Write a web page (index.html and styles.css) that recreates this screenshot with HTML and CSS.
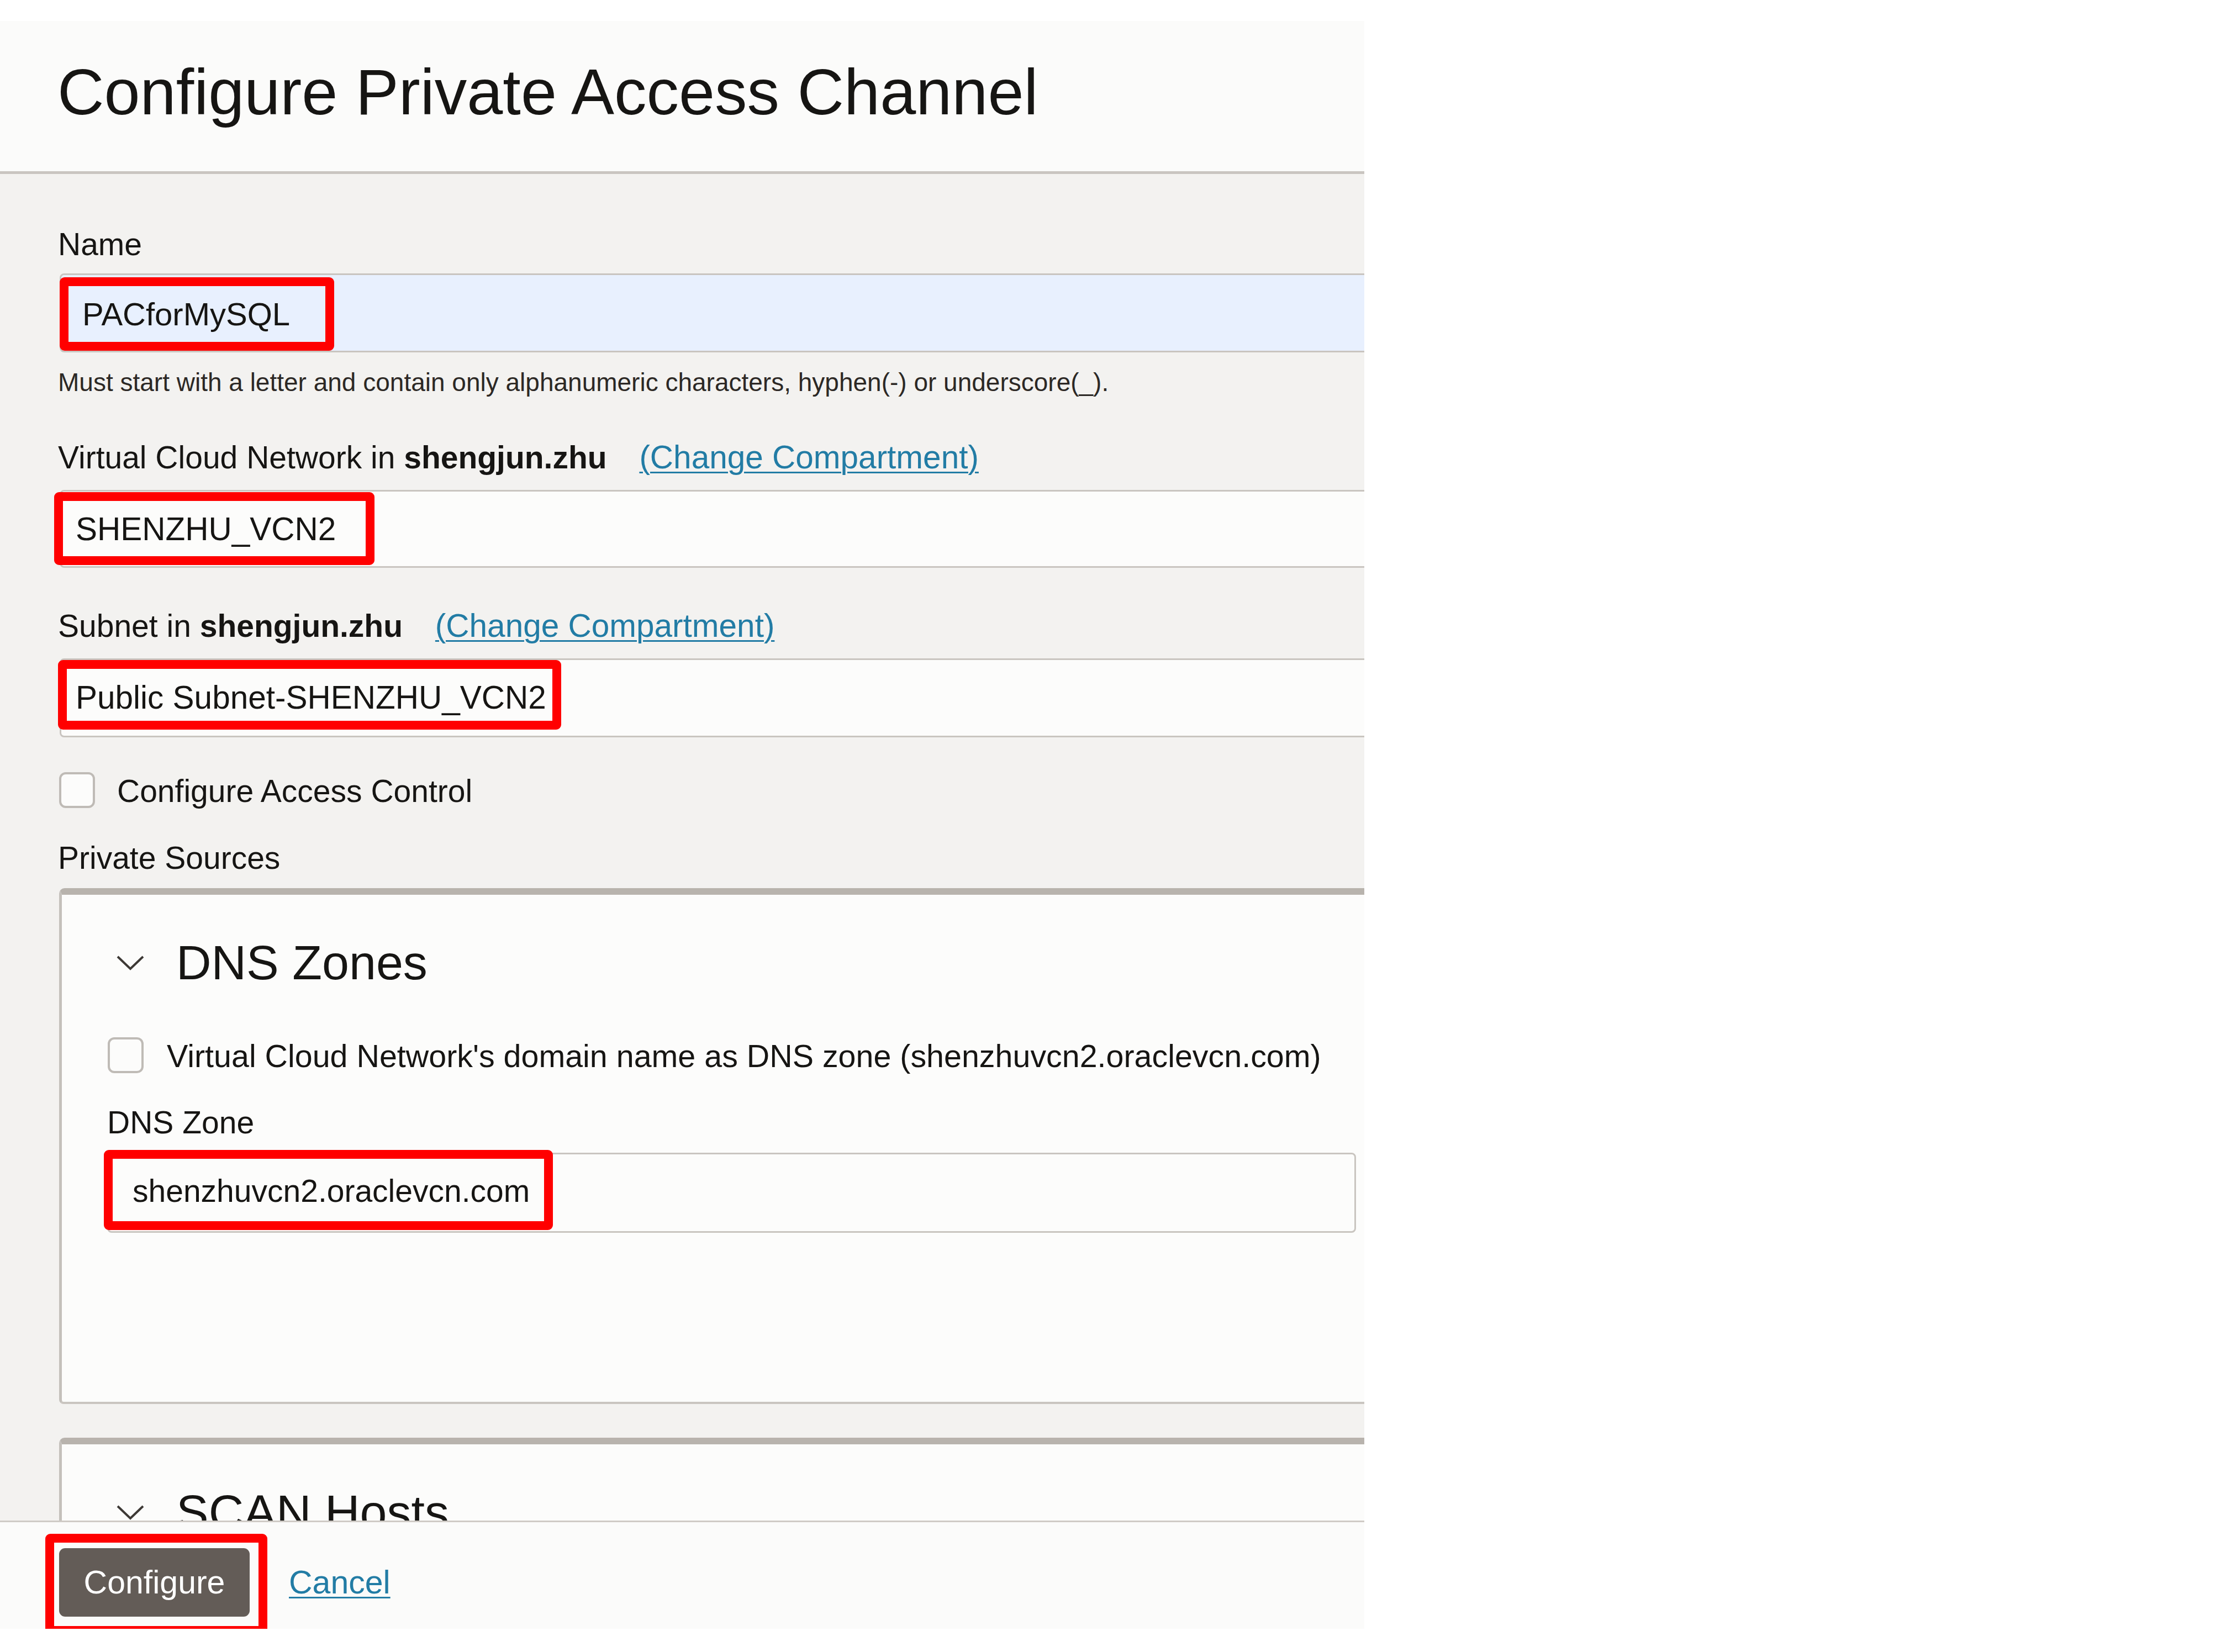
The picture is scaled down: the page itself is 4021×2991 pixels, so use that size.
FILE: index.html
```html
<!DOCTYPE html>
<html lang="en">
<head>
<meta charset="utf-8">
<title>Configure Private Access Channel</title>
<link rel="stylesheet" href="styles.css">
</head>
<body>
<div class="page">
  <div class="panel">
    <header class="panel-header">
      <h1 class="title">Configure Private Access Channel</h1>
    </header>
    <main class="panel-body">
      <label class="label label-name">Name</label>
      <div class="field field-name">
        <span class="field-text">PACforMySQL</span>
        <span class="mark mark-name"></span>
      </div>
      <p class="helper">Must start with a letter and contain only alphanumeric characters, hyphen(-) or underscore(_).</p>

      <div class="label label-vcn">Virtual Cloud Network in <b>shengjun.zhu</b> <a class="link" href="#">(Change Compartment)</a></div>
      <div class="field field-select field-vcn">
        <span class="field-text">SHENZHU_VCN2</span>
        <span class="mark mark-vcn"></span>
      </div>

      <div class="label label-subnet">Subnet in <b>shengjun.zhu</b> <a class="link" href="#">(Change Compartment)</a></div>
      <div class="field field-select field-subnet">
        <span class="field-text">Public Subnet-SHENZHU_VCN2</span>
        <span class="mark mark-subnet"></span>
      </div>

      <div class="check-row check-access">
        <span class="checkbox"></span>
        <span class="check-text">Configure Access Control</span>
      </div>

      <div class="label label-sources">Private Sources</div>

      <section class="card card-dns">
        <div class="card-head">
          <svg class="chevron" width="52" height="28" viewBox="0 0 52 28"><polyline points="3,3 26,25 49,3" fill="none" stroke="#3d3935" stroke-width="4"/></svg>
          <h2 class="card-title">DNS Zones</h2>
        </div>
        <div class="check-row check-dns">
          <span class="checkbox"></span>
          <span class="check-text">Virtual Cloud Network's domain name as DNS zone (shenzhuvcn2.oraclevcn.com)</span>
        </div>
        <div class="label label-zone">DNS Zone</div>
        <div class="field field-zone">
          <span class="field-text">shenzhuvcn2.oraclevcn.com</span>
          <span class="mark mark-zone"></span>
        </div>
      </section>

      <section class="card card-scan">
        <div class="card-head">
          <svg class="chevron" width="52" height="28" viewBox="0 0 52 28"><polyline points="3,3 26,25 49,3" fill="none" stroke="#3d3935" stroke-width="4"/></svg>
          <h2 class="card-title">SCAN Hosts</h2>
        </div>
      </section>
    </main>
    <footer class="panel-footer">
      <div class="btn-wrap">
        <button class="btn-primary" type="button">Configure</button>
        <span class="mark mark-btn"></span>
      </div>
      <a class="link cancel" href="#">Cancel</a>
    </footer>
  </div>
</div>
</body>
</html>
```

FILE: styles.css
```css
* { box-sizing: border-box; }

html, body {
  margin: 0;
  padding: 0;
  background: #ffffff;
}

body {
  font-family: "Liberation Sans", Arial, sans-serif;
  color: #161513;
}

.page {
  padding-top: 38px;
}

.panel {
  width: 2470px;
  height: 2911px;
  display: flex;
  flex-direction: column;
  overflow: visible;
  background: #f3f2f0;
}

.panel-header {
  flex: 0 0 auto;
  height: 277px;
  background: #fbfbfa;
  border-bottom: 5px solid #c9c5c0;
  padding: 59px 0 0 104px;
}

.title {
  margin: 0;
  font-size: 117px;
  line-height: 140px;
  font-weight: 400;
  color: #161513;
  white-space: nowrap;
}

.panel-body {
  flex: 1 1 auto;
  min-height: 0;
  overflow: hidden;
  padding-left: 105px;
  display: flex;
  flex-direction: column;
  align-items: flex-start;
}

.panel-body > * { flex-shrink: 0; }

.label {
  display: block;
  font-size: 57px;
  line-height: 68px;
  color: #161513;
  white-space: nowrap;
}

.label b { font-weight: 700; }

.label-name { margin-top: 93px; }
.label-vcn { margin-top: 74px; }
.label-subnet { margin-top: 71px; }
.label-sources { margin-top: 53px; }

.link {
  color: #227ca5;
  text-decoration: underline;
  text-underline-offset: 6px;
  text-decoration-thickness: 3px;
}

.label .link {
  font-size: 58.5px;
  margin-left: 43px;
}

.field {
  position: relative;
  align-self: stretch;
  flex-shrink: 0;
  margin-left: 3px;
  margin-right: -40px;
  border: 3px solid #c9c5c0;
  border-radius: 8px;
  background: #fcfcfb;
  font-size: 57px;
  line-height: 68px;
  color: #161513;
  white-space: nowrap;
}

.field-name {
  margin-top: 19px;
  height: 143px;
  padding: 37px 0 0 38px;
  background: #e8f0fe;
  font-size: 58px;
}

.field-select {
  padding: 34px 0 0 26px;
  font-size: 58.5px;
}

.field-vcn { margin-top: 25px; height: 141px; }
.field-subnet { margin-top: 25px; height: 143px; }

.helper {
  margin: 26px 0 0 0;
  font-size: 46px;
  line-height: 56px;
  color: #2c2825;
  white-space: nowrap;
}

.mark {
  position: absolute;
  border: 16px solid #ff0000;
  border-radius: 9px;
  pointer-events: none;
}

.mark-name { left: -3px; top: 4px; width: 497px; height: 133px; }
.mark-vcn { left: -13px; top: 1px; width: 580px; height: 132px; }
.mark-subnet { left: -6px; top: 0px; width: 911px; height: 126px; }
.mark-zone { left: -9px; top: -8px; width: 813px; height: 145px; }
.mark-btn { left: -25px; top: -26px; width: 402px; height: 183px; }

.check-row {
  display: flex;
  align-items: flex-start;
  flex-shrink: 0;
}

.check-access { margin-top: 63px; margin-left: 2px; }

.checkbox {
  flex: 0 0 auto;
  width: 65px;
  height: 65px;
  border: 4px solid #bfbbb6;
  border-radius: 12px;
  background: #fcfcfb;
}

.check-text {
  font-size: 57px;
  line-height: 68px;
  margin-left: 40px;
  white-space: nowrap;
  color: #161513;
}

.card {
  align-self: stretch;
  margin-left: 2px;
  margin-right: -30px;
  background: #fcfcfb;
  border-top: 12px solid #b8b3ad;
  border-left: 5px solid #c4c0bb;
  border-radius: 10px 0 0 8px;
  padding: 71px 45px 0 82px;
  display: flex;
  flex-direction: column;
  align-items: flex-start;
  flex: 0 0 auto;
}

.card > * { flex-shrink: 0; }

.card-dns {
  margin-top: 21px;
  border-bottom: 4px solid #c9c5c0;
  padding-bottom: 306px;
}

.card-scan {
  margin-top: 61px;
  height: 400px;
}

.card-head {
  display: flex;
  align-items: center;
}

.chevron {
  display: block;
  margin-left: 16px;
  margin-right: 57px;
}

.card-title {
  margin: 0;
  font-size: 88px;
  line-height: 104px;
  font-weight: 400;
  color: #161513;
  white-space: nowrap;
}

.check-dns { margin-top: 83px; margin-left: 1px; }
.check-dns .check-text { margin-left: 42px; font-size: 57.4px; }

.label-zone { margin-top: 52px; }

.field-zone {
  margin-top: 21px;
  margin-left: 0;
  margin-right: 0;
  height: 145px;
  padding: 32px 0 0 43px;
}

.panel-footer {
  flex: 0 0 auto;
  height: 196px;
  background: #fbfbfa;
  border-top: 3px solid #cfcbc6;
  padding: 47px 0 0 107px;
  display: flex;
  align-items: flex-start;
}

.btn-wrap {
  position: relative;
  flex-shrink: 0;
  width: 345px;
  height: 124px;
}

.btn-primary {
  display: flex;
  align-items: center;
  justify-content: center;
  width: 345px;
  height: 124px;
  border: none;
  border-radius: 11px;
  background: #635c57;
  color: #ffffff;
  font-family: "Liberation Sans", Arial, sans-serif;
  font-size: 59px;
  line-height: 68px;
  padding: 0;
}

.cancel {
  margin-left: 71px;
  margin-top: 28px;
  font-size: 59px;
  line-height: 68px;
}
```
